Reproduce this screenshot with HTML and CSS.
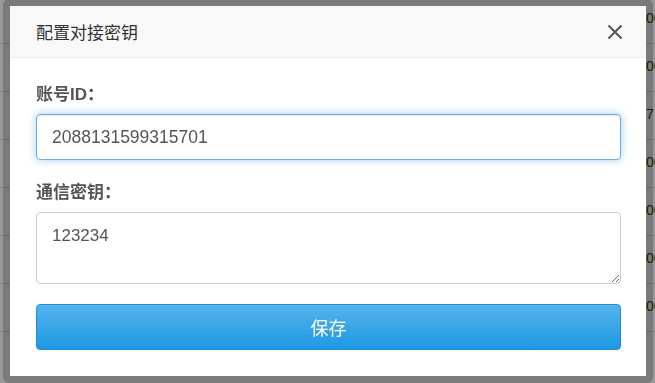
FILE: index.html
```html
<!DOCTYPE html>
<html lang="zh-CN">
<head>
    <meta charset="UTF-8" />
    <meta name="viewport" content="width=device-width, initial-scale=1.0" />
    <title>配置对接密钥</title>
    <link rel="stylesheet" href="styles.css">
</head>
<body>
    <div class="page-table">
        <div class="row"><span class="cell">00</span></div>
        <div class="row"><span class="cell">00</span></div>
        <div class="row"><span class="cell">7.</span></div>
        <div class="row"><span class="cell">00</span></div>
        <div class="row"><span class="cell">00</span></div>
        <div class="row"><span class="cell">00</span></div>
        <div class="row"><span class="cell">00</span></div>
    </div>

    <div class="mask"></div>

    <div class="modal">
        <div class="modal-header">
            <span class="modal-title">配置对接密钥</span>
            <span class="modal-close">
                <svg width="16" height="16" viewBox="0 0 16 16">
                    <path d="M1.5 1.5 L14.5 14.5 M14.5 1.5 L1.5 14.5" stroke="#555" stroke-width="2" fill="none" />
                </svg>
            </span>
        </div>
        <div class="modal-body">
            <label class="field-label">账号ID：</label>
            <input class="field-input focused" type="text" value="2088131599315701" />

            <label class="field-label second">通信密钥：</label>
            <textarea class="field-input field-area">123234</textarea>

            <button class="save-btn">保存</button>
        </div>
    </div>
</body>
</html>
```

FILE: styles.css
```css
body {
    margin: 0;
    padding: 0;
    height: 383px;
    font-family: "Liberation Sans", "Noto Sans CJK SC", sans-serif;
    background: #fff;
    overflow: hidden;
}

.page-table {
    padding-top: 43px;
}

.row {
    height: 47px;
    border-top: 1px solid #ddd;
    position: relative;
}

.row .cell {
    position: absolute;
    left: 646px;
    top: -34px;
    font-size: 14px;
    color: #333;
}

.mask {
    position: fixed;
    top: 0;
    left: 0;
    right: 0;
    bottom: 0;
    background: rgba(0, 0, 0, 0.4);
}

.modal {
    position: absolute;
    left: 3px;
    top: -1px;
    width: 636px;
    background: #fff;
    background-clip: padding-box;
    border: 7px solid rgba(0, 0, 0, 0.2);
    border-radius: 6px;
}

.modal-header {
    height: 51px;
    background: #f8f8f8;
    border-bottom: 1px solid #eee;
    display: flex;
    align-items: center;
    justify-content: space-between;
    padding: 0 23px 0 26px;
}

.modal-title {
    font-size: 17px;
    color: #333;
}

.modal-close {
    display: flex;
    cursor: pointer;
}

.modal-body {
    padding: 26px 25px 26px 26px;
    display: flex;
    flex-direction: column;
}

.field-label {
    font-size: 17px;
    font-weight: bold;
    color: #555;
    line-height: 22px;
    margin-bottom: 8px;
}

.field-label.second {
    margin-top: 22px;
}

.field-input {
    box-sizing: border-box;
    height: 46px;
    padding: 0 15px;
    font-family: "Liberation Sans", "Noto Sans CJK SC", sans-serif;
    font-size: 17.5px;
    color: #555;
    border: 1px solid #ccc;
    border-radius: 4px;
    outline: none;
    background: #fff;
}

.field-input.focused {
    border-color: #66afe9;
    box-shadow: inset 0 1px 1px rgba(0, 0, 0, 0.075), 0 0 8px rgba(102, 175, 233, 0.6);
}

.field-area {
    height: 72px;
    padding: 12px 15px;
    resize: vertical;
    line-height: 22px;
    font-size: 17px;
}

.save-btn {
    margin-top: 20px;
    height: 46px;
    border: 1px solid #1e8fd8;
    border-radius: 4px;
    background: linear-gradient(to bottom, #55b4ec, #1d98e2);
    color: #fff;
    font-family: "Liberation Sans", "Noto Sans CJK SC", sans-serif;
    font-size: 18px;
    cursor: pointer;
}
```
